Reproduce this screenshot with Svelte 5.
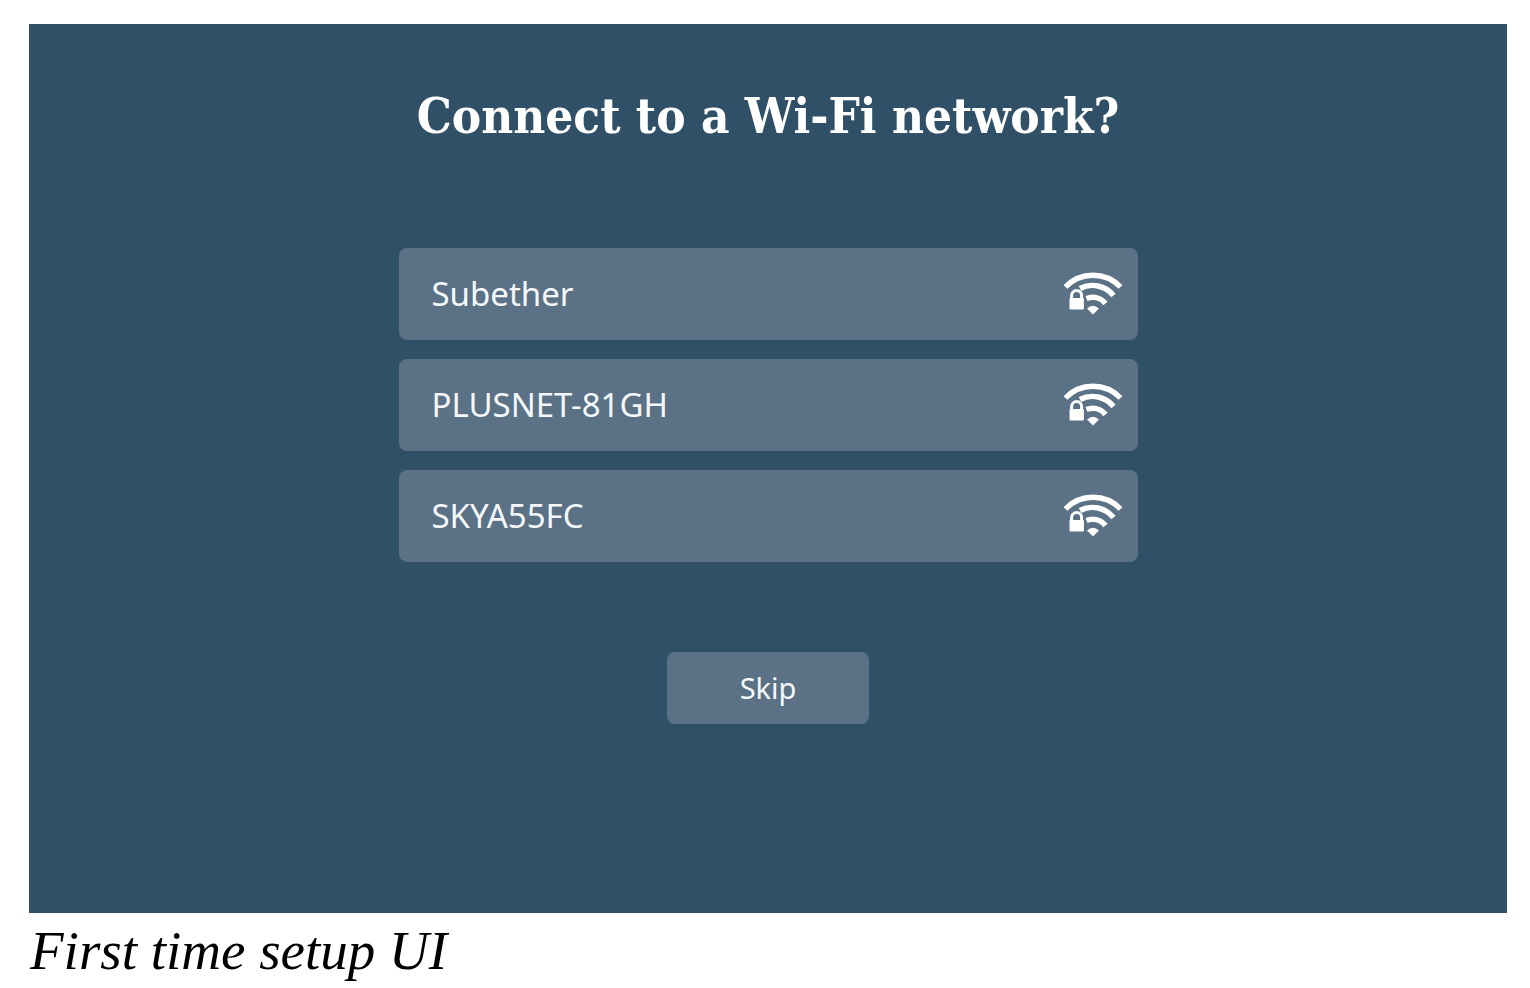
<script lang="ts">
	type Network = {
		ssid: string;
		secured: boolean;
	};

	const networks: Network[] = [
		{ ssid: 'Subether', secured: true },
		{ ssid: 'PLUSNET-81GH', secured: true },
		{ ssid: 'SKYA55FC', secured: true }
	];
</script>

<figure class="figure">
	<main class="screen">
		<h1>Connect to a Wi-Fi network?</h1>
		<ul class="networks">
			{#each networks as network (network.ssid)}
				<li>
					<button type="button" class="network">
						<span class="ssid">{network.ssid}</span>
						<svg class="signal" viewBox="0 0 60 44" aria-hidden="true">
							<g fill="none" stroke="#fff" stroke-width="5.4">
								<path d="M2.5 15A38 38 0 0 1 57.5 15" />
								<path d="M17 16.5A27 27 0 0 1 50.5 23.5" />
								<path d="M23.5 26.5A16 16 0 0 1 42.5 31.5" />
							</g>
							<path d="M24 36.5Q30 31 36 36.5L30 42.5Z" fill="#fff" />
							{#if network.secured}
								<path d="M8.6 28V23.500A5 5 0 0 1 18.600 23.500V28" fill="none" stroke="#fff" stroke-width="3" />
								<rect x="6.500" y="26" width="14.400" height="11.500" rx="1" fill="#fff" />
							{/if}
						</svg>
					</button>
				</li>
			{/each}
		</ul>
		<button type="button" class="skip">Skip</button>
	</main>
	<figcaption>First time setup UI</figcaption>
</figure>

<style>
	:global(body) {
		margin: 0;
		background: #fff;
	}

	.figure {
		margin: 0;
		padding: 24px 23px 0 29px;
	}

	.screen {
		display: flex;
		flex-direction: column;
		align-items: center;
		box-sizing: border-box;
		padding: 60px 24px 189px;
		background: #305067;
		font-family: 'Noto Sans', 'Open Sans', sans-serif;
	}

	h1 {
		margin: 0 0 100px;
		color: #fff;
		font-family: 'DejaVu Serif Condensed', 'DejaVu Serif', serif;
		font-size: 49px;
		font-weight: 700;
		line-height: 64px;
		text-align: center;
	}

	.networks {
		display: flex;
		flex-direction: column;
		gap: 19px;
		width: 100%;
		max-width: 739px;
		margin: 0 0 90px;
		padding: 0;
		list-style: none;
	}

	button {
		border: 0;
		border-radius: 8px;
		background: #5b7186;
		color: #f4f8fa;
		font-family: inherit;
		cursor: pointer;
	}

	.network {
		display: flex;
		align-items: center;
		justify-content: space-between;
		width: 100%;
		padding: 22px 15px 22px 33px;
		font-size: 33px;
		line-height: 48px;
	}

	.signal {
		width: 60px;
		height: 44px;
	}

	.skip {
		padding: 12px 73px;
		font-size: 29px;
		line-height: 48px;
	}

	figcaption {
		padding-left: 1px;
		color: #000;
		font-family: 'Liberation Serif', serif;
		font-size: 55px;
		font-style: italic;
		line-height: 75px;
	}
</style>
